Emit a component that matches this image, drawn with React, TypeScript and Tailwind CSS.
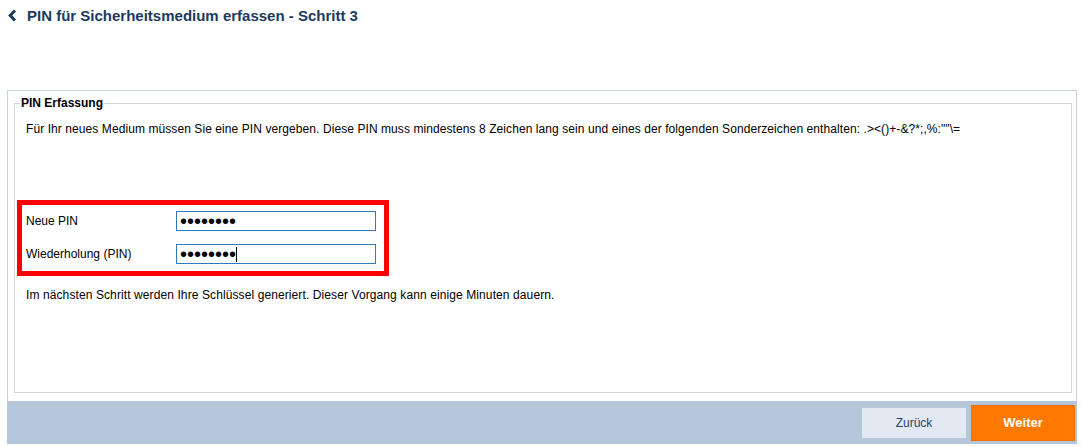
const PinDots = ({ caret = false }: { caret?: boolean }) => (
  <div className="w-[200px] h-[20px] border border-[#2f78c2] bg-white flex items-center pl-[3px] overflow-hidden">
    <span className="text-[20px] leading-[20px] text-black tracking-[0px]">••••••••</span>
    {caret && <span className="w-[1px] h-[15px] bg-black" />}
  </div>
);

export default function App() {
  return (
    <div className="w-[1082px] h-[447px] bg-white text-[12px] leading-[14px] text-black font-['Liberation_Sans',Arial,sans-serif]">
      {/* header */}
      <div className="h-[31px] flex items-center pl-[8px] gap-[10px]">
        <svg width="9" height="13" viewBox="0 0 9 13" className="text-[#1b3a5e]">
          <path d="M7 1.5 L2.2 6.5 L7 11.5" fill="none" stroke="currentColor" strokeWidth="3" />
        </svg>
        <h1 className="text-[15px] font-bold text-[#1b3a5e]">PIN für Sicherheitsmedium erfassen - Schritt 3</h1>
      </div>

      <div className="mt-[59px] ml-[7px] w-[1070px]">
        <div className="border border-b-0 border-[#c7d3df] pl-[6px] pr-[4px] pt-[5px] pb-[8px]">
          <fieldset className="h-[297px] border border-[#d6d6d6] px-[11px] m-0">
            <legend className="-ml-[6px] px-[1px] font-bold leading-[14px]">PIN Erfassung</legend>
            <p className="mt-[12px] tracking-[0.08px]">
              Für Ihr neues Medium müssen Sie eine PIN vergeben. Diese PIN muss mindestens 8 Zeichen lang sein und eines der folgenden Sonderzeichen enthalten: .&gt;&lt;()+-&amp;?*;,%:&quot;&quot;\=
            </p>

            <div className="mt-[64px] -ml-[9px] w-[372px] border-[5px] border-[#ff0000] pl-[4px] pt-[6px] pb-[7px] flex flex-col gap-[13px]">
              <div className="flex items-center">
                <label className="w-[150px]">Neue PIN</label>
                <PinDots />
              </div>
              <div className="flex items-center">
                <label className="w-[150px]">Wiederholung (PIN)</label>
                <PinDots caret />
              </div>
            </div>

            <p className="mt-[12px] tracking-[0.1px]">
              Im nächsten Schritt werden Ihre Schlüssel generiert. Dieser Vorgang kann einige Minuten dauern.
            </p>
          </fieldset>
        </div>

        {/* footer */}
        <div className="h-[43px] bg-[#b5c6da] flex items-center justify-end gap-[5px] pr-[2px]">
          <button className="w-[104px] h-[30px] bg-[#e2e9f3] text-[12px] text-[#23446b]">Zurück</button>
          <button className="w-[104px] h-[36px] bg-[#ff7800] border border-[#f07000] text-[13px] font-bold text-white">Weiter</button>
        </div>
      </div>
    </div>
  );
}
